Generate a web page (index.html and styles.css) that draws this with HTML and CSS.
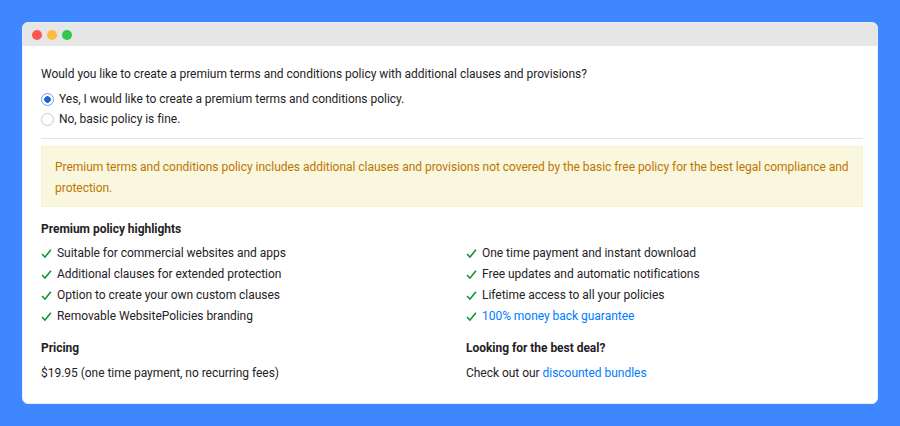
FILE: index.html
```html
<!DOCTYPE html>
<html lang="en">
  <head>
    <title>Premium policy</title>
    <link rel="stylesheet" href="styles.css">
  </head>
  <body>
    <div class="window">
      <div class="titlebar">
        <span class="dot red"></span><span class="dot yellow"></span><span class="dot green"></span>
      </div>
      <div class="content">
        <p class="question">Would you like to create a premium terms and conditions policy with additional clauses and provisions?</p>
        <label class="radio"><span class="circle on"></span>Yes, I would like to create a premium terms and conditions policy.</label>
        <label class="radio"><span class="circle"></span>No, basic policy is fine.</label>
        <hr>
        <div class="notice">Premium terms and conditions policy includes additional clauses and provisions not covered by the basic free policy for the best legal compliance and protection.</div>
        <h4 class="highlights">Premium policy highlights</h4>
        <div class="columns">
          <ul>
            <li><svg viewBox="0 0 12 12"><path d="M1.2 6.6 4.3 10 10.8 1.8"/></svg>Suitable for commercial websites and apps</li>
            <li><svg viewBox="0 0 12 12"><path d="M1.2 6.6 4.3 10 10.8 1.8"/></svg>Additional clauses for extended protection</li>
            <li><svg viewBox="0 0 12 12"><path d="M1.2 6.6 4.3 10 10.8 1.8"/></svg>Option to create your own custom clauses</li>
            <li><svg viewBox="0 0 12 12"><path d="M1.2 6.6 4.3 10 10.8 1.8"/></svg>Removable WebsitePolicies branding</li>
          </ul>
          <ul>
            <li><svg viewBox="0 0 12 12"><path d="M1.2 6.6 4.3 10 10.8 1.8"/></svg>One time payment and instant download</li>
            <li><svg viewBox="0 0 12 12"><path d="M1.2 6.6 4.3 10 10.8 1.8"/></svg>Free updates and automatic notifications</li>
            <li><svg viewBox="0 0 12 12"><path d="M1.2 6.6 4.3 10 10.8 1.8"/></svg>Lifetime access to all your policies</li>
            <li><svg viewBox="0 0 12 12"><path d="M1.2 6.6 4.3 10 10.8 1.8"/></svg><a href="#">100% money back guarantee</a></li>
          </ul>
        </div>
        <div class="columns bottom">
          <div>
            <h4>Pricing</h4>
            <p>$19.95 (one time payment, no recurring fees)</p>
          </div>
          <div>
            <h4>Looking for the best deal?</h4>
            <p>Check out our <a href="#">discounted bundles</a></p>
          </div>
        </div>
      </div>
    </div>
  </body>
</html>
```
FILE: styles.css
```css
html, body {height: 100%}
body {margin: 0; background: #3e87fe; padding: 22px; box-sizing: border-box; font: 12px/21px Roboto, sans-serif; color: #1f2226; letter-spacing: -0.03px}
.window {background: #fff; border: 1px solid #e4edf8; border-radius: 6px; overflow: hidden; height: 382px; box-sizing: border-box}
.titlebar {height: 23px; background: #e6e6e6; display: flex; align-items: center; gap: 5px; padding-left: 9px}
.dot {width: 10px; height: 10px; border-radius: 50%}
.red {background: #fc5753}
.yellow {background: #fdbc40}
.green {background: #33c748}
.content {padding: 18px 14px 0 18px}
p {margin: 0}
.question {margin-bottom: 4px}
.radio {display: flex; align-items: center; height: 20.5px}
.circle {width: 11px; height: 11px; border: 1px solid #c9c9c9; border-radius: 50%; margin-right: 5px; background: #fff}
.circle.on {border-color: #6ea2ea; background: radial-gradient(circle, #1a66d8 0 3px, #fff 3.6px)}
hr {border: 0; border-top: 1px solid #e5e5e5; margin: 8px 0 7px}
.notice {background: #f9f7de; border: 1px solid #f5f2cf; color: #bd7600; padding: 10px 10px 7px 13px; height: 61px; box-sizing: border-box}
h4 {margin: 0; font-size: 12px; font-weight: 700}
.highlights {margin-top: 12px; margin-bottom: 3px}
.columns {display: grid; grid-template-columns: 425px 1fr}
ul {list-style: none; margin: 0; padding: 0}
li {display: flex; align-items: center}
li svg {width: 11px; height: 11px; margin-right: 5px; fill: none; stroke: #0a9130; stroke-width: 1.7}
a {color: #007bff; text-decoration: none}
.bottom {margin-top: 11px}
.bottom h4 {margin-bottom: 4px}
```
